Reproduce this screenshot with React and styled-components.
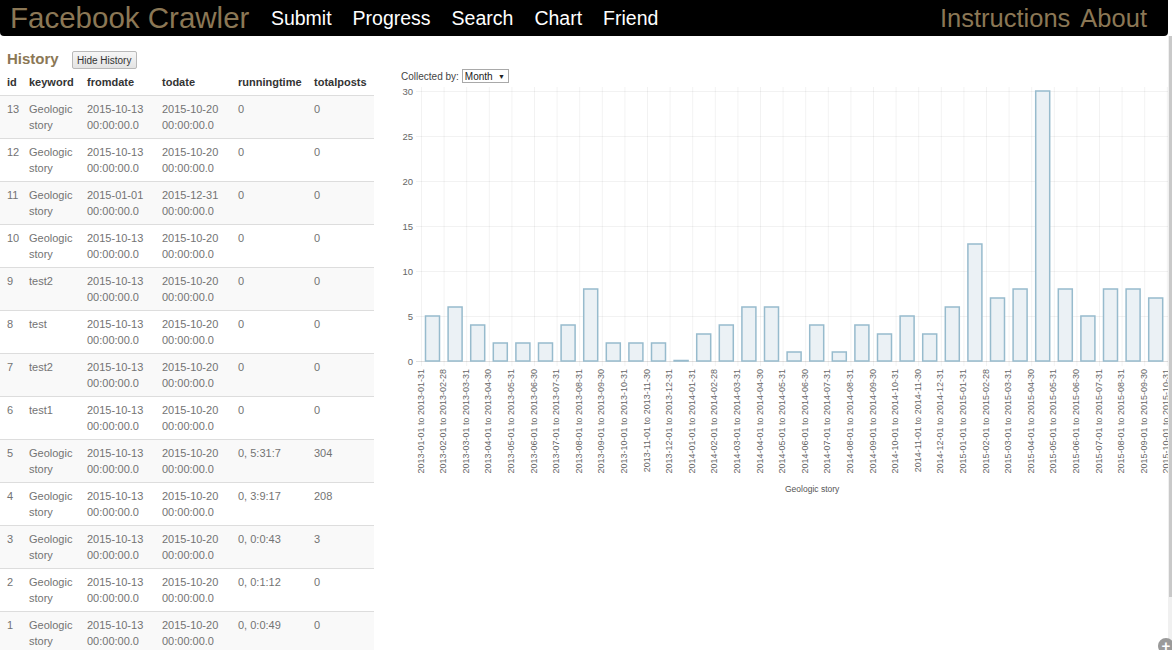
import React from "react"
import styled, { createGlobalStyle } from "styled-components"

const GlobalStyle = createGlobalStyle`
  html, body {
    margin: 0;
    padding: 0;
    background: #ffffff;
    overflow: hidden;
  }
  body {
    font-family: "Liberation Sans", Arial, sans-serif;
  }
`

const TAN = "#8b7755"

const Page = styled.div`
  display: flex;
  width: 1172px;
  height: 650px;
  position: relative;
`

const Main = styled.div`
  width: 1168px;
  display: flex;
  flex-direction: column;
`

const ScrollTrack = styled.div`
  width: 4px;
  margin-top: 36px;
  display: flex;
  flex-direction: column;
  background: #f0f0f0;
`

const ScrollThumb = styled.div`
  height: 561px;
  margin-left: 1px;
  width: 3px;
  background: #c9c9c9;
`

const Navbar = styled.div`
  height: 36px;
  background: #000;
  border-radius: 0 0 4px 4px;
  display: flex;
  align-items: center;
  padding: 0 21px 0 10px;
  white-space: nowrap;
`

const Brand = styled.div`
  font-size: 29.5px;
  color: ${TAN};
  margin-right: 11px;
  line-height: 36px;
`

const NavLink = styled.div`
  font-size: 19.5px;
  color: #fff;
  padding: 0 10.5px;
`

const NavRight = styled.div`
  margin-left: auto;
  display: flex;
  gap: 10px;
`

const RightLink = styled.div`
  font-size: 25.5px;
  color: ${TAN};
`

const Content = styled.div`
  display: flex;
  flex: 1;
  min-height: 0;
`

const HistoryPanel = styled.div`
  width: 374px;
  flex: none;
`

const HistoryBar = styled.div`
  display: flex;
  align-items: center;
  height: 18px;
  margin-top: 15px;
  padding-left: 7px;
`

const HistoryTitle = styled.div`
  font-size: 15px;
  font-weight: bold;
  color: ${TAN};
  margin: -3px 13px 0 0;
`

const HideButton = styled.div`
  height: 16px;
  width: 63px;
  border: 1px solid #b9b9b9;
  border-radius: 2px;
  background: linear-gradient(#f6f6f6, #e4e4e4);
  font-size: 10px;
  color: #333;
  display: flex;
  align-items: center;
  justify-content: center;
`

const Table = styled.table`
  border-collapse: collapse;
  table-layout: fixed;
  width: 374px;
  margin-top: 2px;
  font-size: 11px;
`

const Th = styled.th`
  width: ${(p) => p.$w - 7}px;
  text-align: left;
  font-weight: bold;
  color: #333;
  padding: 4px 0 6px 7px;
  line-height: 14px;
  white-space: nowrap;
  border-bottom: 1px solid #ddd;
`

const Row = styled.tr`
  background: ${(p) => (p.$striped ? "#f9f9f9" : "#fff")};
`

const Td = styled.td`
  padding: 5px 0 5px 7px;
  line-height: 16px;
  color: #737373;
  vertical-align: top;
  white-space: nowrap;
  border-top: 1px solid #ddd;
`

const ChartPanel = styled.div`
  flex: 1;
  padding-left: 21px;
  overflow: hidden;
  min-width: 0;
`

const Controls = styled.div`
  display: flex;
  align-items: center;
  margin-top: 33px;
  height: 14px;
  padding-left: 6px;
  font-size: 10px;
  color: #444;
`

const SelectBox = styled.div`
  margin-left: 3px;
  height: 12px;
  width: 40px;
  border: 1px solid #a9a9a9;
  display: flex;
  align-items: center;
  justify-content: space-between;
  padding: 0 3px 0 2px;
  box-sizing: content-box;
  font-size: 10px;
  color: #222;
`

const Arrow = styled.span`
  font-size: 7px;
`

const ChartSvg = styled.svg`
  display: block;
  margin-top: 4px;
`

const Legend = styled.div`
  position: relative;
  margin-top: 3px;
  padding-left: 390px;
  font-size: 8.5px;
  color: #555;
  white-space: nowrap;
`

const Swatch = styled.span`
  position: absolute;
  left: 388px;
  top: 7px;
  width: 9px;
  height: 8px;
  border-radius: 4px;
  background: #eaf1f5;
  z-index: -1;
`

const ZoomBadge = styled.div`
  position: absolute;
  left: 1158px;
  top: 638px;
  width: 16px;
  height: 16px;
  border-radius: 50%;
  background: #9a9a9a;
  color: #fff;
  font-size: 15px;
  font-weight: bold;
  line-height: 16px;
  text-align: center;
`

const rows = [
  [13, "Geologic story", "2015-10-13", "2015-10-20", "0", "0"],
  [12, "Geologic story", "2015-10-13", "2015-10-20", "0", "0"],
  [11, "Geologic story", "2015-01-01", "2015-12-31", "0", "0"],
  [10, "Geologic story", "2015-10-13", "2015-10-20", "0", "0"],
  [9, "test2", "2015-10-13", "2015-10-20", "0", "0"],
  [8, "test", "2015-10-13", "2015-10-20", "0", "0"],
  [7, "test2", "2015-10-13", "2015-10-20", "0", "0"],
  [6, "test1", "2015-10-13", "2015-10-20", "0", "0"],
  [5, "Geologic story", "2015-10-13", "2015-10-20", "0, 5:31:7", "304"],
  [4, "Geologic story", "2015-10-13", "2015-10-20", "0, 3:9:17", "208"],
  [3, "Geologic story", "2015-10-13", "2015-10-20", "0, 0:0:43", "3"],
  [2, "Geologic story", "2015-10-13", "2015-10-20", "0, 0:1:12", "0"],
  [1, "Geologic story", "2015-10-13", "2015-10-20", "0, 0:0:49", "0"],
]

const columns = [
  ["id", 22],
  ["keyword", 58],
  ["fromdate", 75],
  ["todate", 76],
  ["runningtime", 76],
  ["totalposts", 67],
]

const values = [
  5, 6, 4, 2, 2, 2, 4, 8, 2, 2, 2, 0,
  3, 4, 6, 6, 1, 4, 1, 4, 3, 5, 3, 6,
  13, 7, 8, 30, 8, 5, 8, 8, 7, 5,
]

const monthEnd = [31, 28, 31, 30, 31, 30, 31, 31, 30, 31, 30, 31]

const labelFor = (i) => {
  const y = 2013 + Math.floor(i / 12)
  const m = (i % 12) + 1
  const mm = String(m).padStart(2, "0")
  return `${y}-${mm}-01 to ${y}-${mm}-${monthEnd[m - 1]}`
}

const STEP = 22.6
const LEFT = 26
const ZERO = 274
const UNIT = 9

const BarChart = () => {
  const width = 800
  return (
    <ChartSvg width={width} height={394} viewBox={`0 0 ${width} 394`}>
      {[0, 5, 10, 15, 20, 25, 30].map((v) => (
        <g key={v}>
          <line
            x1={LEFT - 5}
            x2={width}
            y1={ZERO - v * UNIT + 0.5}
            y2={ZERO - v * UNIT + 0.5}
            stroke={v === 0 ? "rgba(0,0,0,0.12)" : "rgba(0,0,0,0.05)"}
          />
          <text
            x={18}
            y={ZERO - v * UNIT + 3.5}
            fontSize="9.5"
            fill="#666"
            textAnchor="end"
            fontFamily="Liberation Sans, Arial, sans-serif"
          >
            {v}
          </text>
        </g>
      ))}
      {values.map((_, i) => (
        <line
          key={"g" + i}
          x1={LEFT + i * STEP + 0.5}
          x2={LEFT + i * STEP + 0.5}
          y1={0}
          y2={ZERO + 5}
          stroke="rgba(0,0,0,0.05)"
        />
      ))}
      {values.map((v, i) => {
        const cx = LEFT + 11.5 + i * STEP
        const h = Math.max(v * UNIT, 0.5)
        return (
          <rect
            key={"b" + i}
            x={cx - 7}
            y={ZERO - h}
            width={14}
            height={h}
            fill="#ebf1f5"
            stroke="#97bbcd"
            strokeWidth="1.5"
          />
        )
      })}
      {values.map((_, i) => {
        const x = LEFT + i * STEP - 0.5
        return (
          <text
            key={"l" + i}
            transform={`translate(${x + 3} 282) rotate(-90)`}
            fontSize="9"
            fill="#666"
            textAnchor="end"
            fontFamily="Liberation Sans, Arial, sans-serif"
          >
            {labelFor(i)}
          </text>
        )
      })}
    </ChartSvg>
  )
}

const App = () => {
  return (
    <Page>
      <GlobalStyle />
      <Main>
        <Navbar>
          <Brand>Facebook Crawler</Brand>
          <NavLink>Submit</NavLink>
          <NavLink>Progress</NavLink>
          <NavLink>Search</NavLink>
          <NavLink>Chart</NavLink>
          <NavLink>Friend</NavLink>
          <NavRight>
            <RightLink>Instructions</RightLink>
            <RightLink>About</RightLink>
          </NavRight>
        </Navbar>
        <Content>
          <HistoryPanel>
            <HistoryBar>
              <HistoryTitle>History</HistoryTitle>
              <HideButton>Hide History</HideButton>
            </HistoryBar>
            <Table>
              <thead>
                <tr>
                  {columns.map(([name, w]) => (
                    <Th key={name} $w={w}>
                      {name}
                    </Th>
                  ))}
                </tr>
              </thead>
              <tbody>
                {rows.map((r, i) => (
                  <Row key={r[0]} $striped={i % 2 === 0}>
                    <Td>{r[0]}</Td>
                    <Td>
                      {r[1].split(" ").map((w, k) => (
                        <div key={k}>{w}</div>
                      ))}
                    </Td>
                    <Td>
                      {r[2]}
                      <br />
                      00:00:00.0
                    </Td>
                    <Td>
                      {r[3]}
                      <br />
                      00:00:00.0
                    </Td>
                    <Td>{r[4]}</Td>
                    <Td>{r[5]}</Td>
                  </Row>
                ))}
              </tbody>
            </Table>
          </HistoryPanel>
          <ChartPanel>
            <Controls>
              Collected by:
              <SelectBox>
                Month <Arrow>▼</Arrow>
              </SelectBox>
            </Controls>
            <BarChart />
            <Legend>
              <Swatch />
              Geologic story
            </Legend>
          </ChartPanel>
        </Content>
      </Main>
      <ScrollTrack>
        <ScrollThumb />
      </ScrollTrack>
      <ZoomBadge>+</ZoomBadge>
    </Page>
  )
}

export default App
